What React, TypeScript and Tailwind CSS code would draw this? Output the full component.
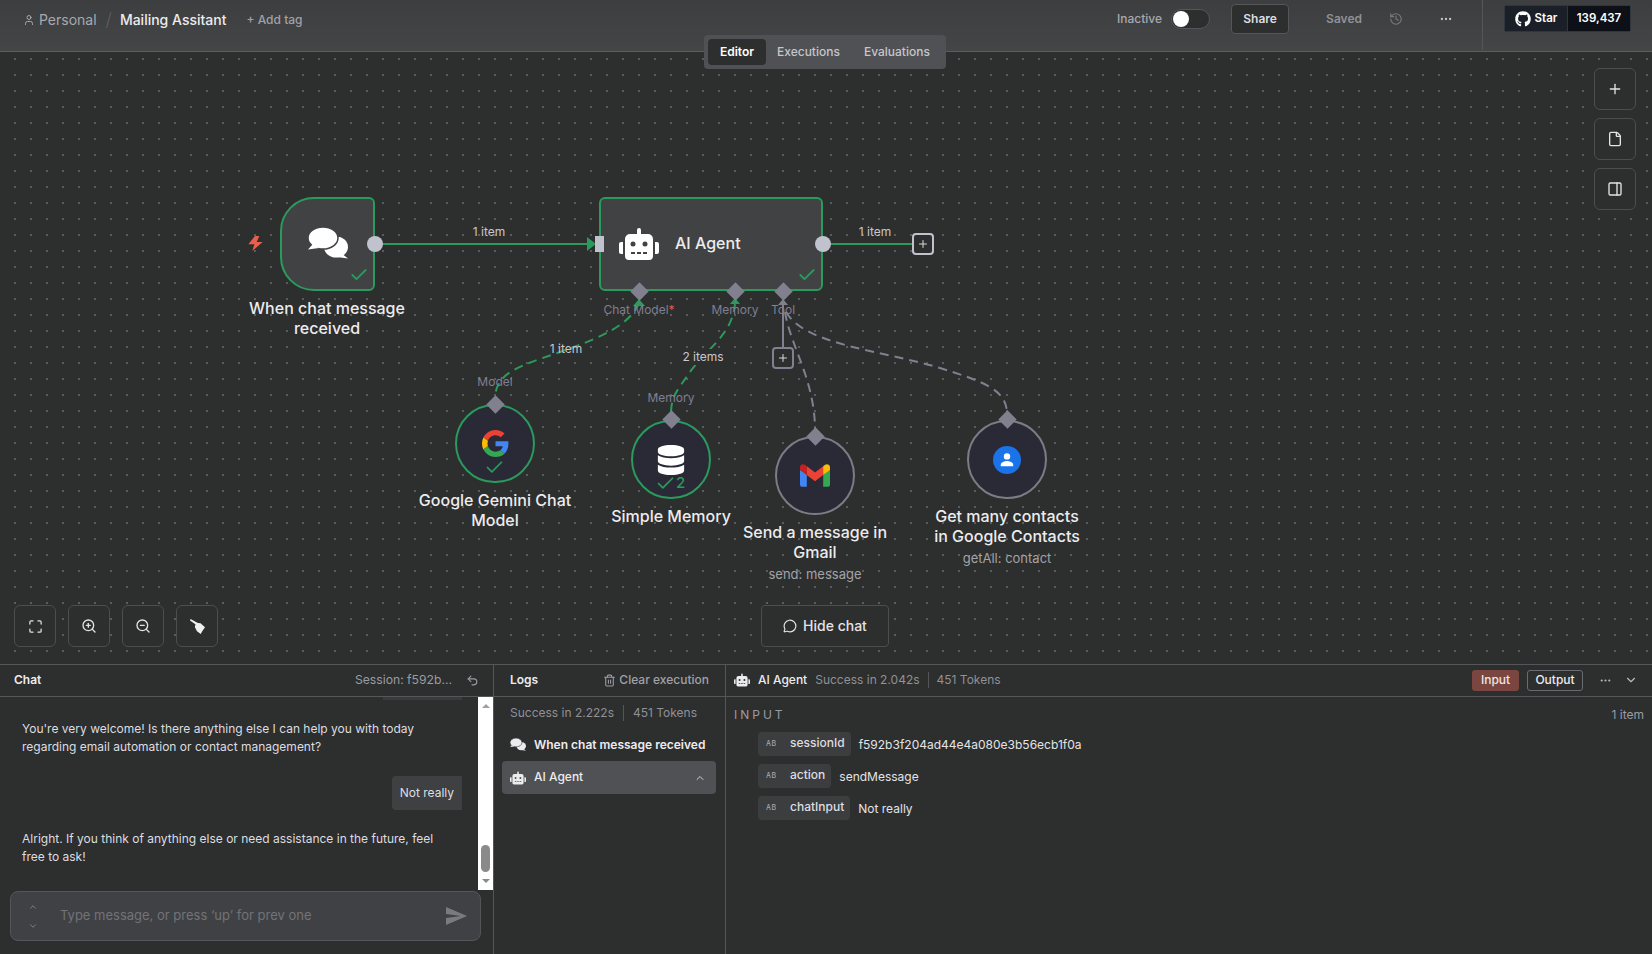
import React from 'react';
import {
  Check,
  ChevronDown,
  ChevronUp,
  Ellipsis,
  File,
  History,
  Maximize,
  MessageCircle,
  PanelRight,
  Plus,
  Trash2,
  Undo2,
  User,
  ZoomIn,
  ZoomOut,
} from 'lucide-react';
import { FaDatabase, FaGithub, FaRobot } from 'react-icons/fa';
import { MdSend } from 'react-icons/md';

const GoogleG = () => (
  <svg viewBox="0 0 48 48" className="w-[27px] h-[27px]">
    <path fill="#EA4335" d="M24 9.5c3.54 0 6.71 1.22 9.21 3.6l6.85-6.85C35.9 2.38 30.47 0 24 0 14.62 0 6.51 5.38 2.56 13.22l7.98 6.19C12.43 13.72 17.74 9.5 24 9.5z" />
    <path fill="#4285F4" d="M46.98 24.55c0-1.57-.15-3.09-.38-4.55H24v9.02h12.94c-.58 2.96-2.26 5.48-4.78 7.18l7.73 6c4.51-4.18 7.09-10.36 7.09-17.65z" />
    <path fill="#FBBC05" d="M10.53 28.59c-.48-1.45-.76-2.99-.76-4.59s.27-3.14.76-4.59l-7.98-6.19C.92 16.46 0 20.12 0 24c0 3.88.92 7.54 2.56 10.78l7.97-6.19z" />
    <path fill="#34A853" d="M24 48c6.48 0 11.93-2.13 15.89-5.81l-7.73-6c-2.15 1.45-4.92 2.3-8.16 2.3-6.26 0-11.57-4.22-13.47-9.91l-7.98 6.19C6.51 42.62 14.62 48 24 48z" />
  </svg>
);

const GmailLogo = () => (
  <svg viewBox="0 0 256 193" className="w-[30px] h-[23px]">
    <path fill="#4285F4" d="M58.182 192.05V93.14L27.507 65.077 0 49.504v125.091c0 9.658 7.825 17.455 17.455 17.455h40.727Z" />
    <path fill="#34A853" d="M197.818 192.05h40.727c9.659 0 17.455-7.826 17.455-17.455V49.505l-31.156 17.837-27.026 25.798v98.91Z" />
    <path fill="#EA4335" d="m58.182 93.14-4.174-38.647 4.174-36.989L128 69.868l69.818-52.364 4.669 34.992-4.669 40.644L128 145.504z" />
    <path fill="#FBBC04" d="M197.818 17.504V93.14L256 49.504V26.231c0-21.585-24.64-33.89-41.89-20.945l-16.292 12.218Z" />
    <path fill="#C5221F" d="m0 49.504 26.759 20.07L58.182 93.14V17.504L41.89 5.286C24.61-7.66 0 4.646 0 26.23v23.273Z" />
  </svg>
);

const ContactsLogo = () => (
  <svg viewBox="0 0 28 28" className="w-[28px] h-[28px]">
    <circle cx="14" cy="14" r="14" fill="#1a73e8" />
    <circle cx="14" cy="10.4" r="3.2" fill="#fff" />
    <path fill="#fff" d="M7.8 18.6c0-2.4 4-3.6 6.2-3.6s6.2 1.2 6.2 3.6v1.6H7.8z" />
  </svg>
);

// two speech bubbles, the front one cut out by the background colour
const ChatBubbles = ({ className, gap }: { className: string; gap: string }) => (
  <svg viewBox="0 0 40 32" className={className} fill="currentColor">
    <ellipse cx="28" cy="20" rx="12" ry="10.5" />
    <path d="M33 26 L40 31.5 L29 30 Z" />
    <ellipse cx="15" cy="11" rx="15" ry="11" stroke={gap} strokeWidth="1.5" />
    <path d="M5 17 L0 22.5 L11 21 Z" />
  </svg>
);

const BroomIcon = () => (
  <svg viewBox="0 0 15 15" className="w-[15px] h-[15px]" fill="#f0f0f2">
    <path d="M0.6 0 L8.2 4.2 L6.8 6.2 L0 1.6 Z" />
    <path d="M6 3.8 L10.5 4.2 L15 8.3 L12.4 12 L10.7 15 L7 12.2 L4.8 8 Z" />
  </svg>
);

// n8n style connector point
const Diamond = ({ className }: { className: string }) => (
  <div className={`absolute w-[13px] h-[13px] rotate-45 bg-[#80808f] ${className}`} />
);

const PortLabel = ({ className, children }: { className: string; children: React.ReactNode }) => (
  <div className={`absolute -translate-x-1/2 text-xs leading-4 text-[#7f7f93] whitespace-nowrap ${className}`}>{children}</div>
);

const EdgeLabel = ({ className, children }: { className: string; children: React.ReactNode }) => (
  <div className={`absolute -translate-x-1/2 text-xs leading-4 text-[#c8c8cc] whitespace-nowrap ${className}`}>{children}</div>
);

const NodeTitle = ({ className, lines, sub }: { className: string; lines: string[]; sub?: string }) => (
  <div className={`absolute -translate-x-1/2 w-[190px] text-center text-base leading-5 font-medium text-[#ececee] ${className}`}>
    {lines.map((line) => (
      <div key={line}>{line}</div>
    ))}
    {sub && <div className="mt-[3px] text-[13px] leading-[18px] font-normal text-[#a3a3a8]">{sub}</div>}
  </div>
);

const CanvasButton = ({ children }: { children: React.ReactNode }) => (
  <button className="w-[42px] h-[42px] flex items-center justify-center rounded-md border border-[#4c4d50] bg-[#2d2e2e] text-[#e4e4e6]">
    {children}
  </button>
);

const CircleNode = ({ className, children, green }: { className: string; children: React.ReactNode; green?: boolean }) => (
  <div
    className={`absolute w-[80px] h-[79px] rounded-full border-2 bg-[#292a36] flex items-center justify-center ${
      green ? 'border-[#2b9a5c]' : 'border-[#7c7c85]'
    } ${className}`}
  >
    {children}
  </div>
);

const Pill = ({ name, value }: { name: string; value: string }) => (
  <div className="flex items-center gap-2 h-6">
    <div className="flex items-center h-6 rounded bg-[#3c3d3f] pl-2 pr-[6px]">
      <span className="w-[24px] text-[7px] font-medium tracking-[0.5px] text-[#a3a5aa]">AB</span>
      <span className="text-xs leading-4 -mt-[3px] font-medium text-[#dcdde0]">{name}</span>
    </div>
    <span className="mt-[2px] text-xs text-[#e4e4e6]">{value}</span>
  </div>
);

export default function App() {
  return (
    <div className="relative flex flex-col w-full h-[954px] overflow-hidden bg-[#2d2e2e] font-['Inter',sans-serif] text-[#e4e4e6]">
      {/* Top bar */}
      <header className="h-[52px] shrink-0 border-b border-[#5b5c5e] bg-gradient-to-b from-[#3d3e40] to-[#444547] flex items-start">
        <div className="flex items-center h-[39px] pl-[23px]">
          <User size={12} className="text-[#a7a9ae]" />
          <span className="ml-[4px] text-sm text-[#a7a9ae]">Personal</span>
          <span className="ml-[9px] text-lg font-light text-[#5d5e61]">/</span>
          <span className="ml-[8px] text-sm font-medium text-[#ececee]">Mailing Assitant</span>
          <span className="ml-[20px] text-xs font-medium text-[#a0a2a8]">+ Add tag</span>
        </div>
        <div className="ml-auto flex items-center h-[38px]">
          <span className="text-xs font-medium text-[#a7a9ae]">Inactive</span>
          <div className="ml-[9px] w-[39px] h-[20px] rounded-full border border-[#55565a] bg-[#2d2e2e] flex items-center pl-[1px]">
            <div className="w-[16px] h-[16px] rounded-full bg-white" />
          </div>
          <button className="ml-[21px] w-[58px] h-[30px] rounded border border-[#55565a] bg-[#2d2e2e] text-xs font-semibold text-[#dcdde0]">
            Share
          </button>
          <span className="ml-[37px] text-xs font-semibold text-[#8f9197]">Saved</span>
          <History size={14} className="ml-[27px] text-[#77787c]" />
          <Ellipsis size={14} className="ml-[36px] text-[#c5c6ca]" />
          <div className="ml-[29px] w-px h-[50px] self-start bg-[#55565a]" />
        </div>
        <div className="ml-[21px] mr-[21px] mt-[5px] flex h-[27px] w-[127px] rounded-[2px] border border-[#30363d] text-[11.5px] font-semibold text-white">
          <div className="w-[63px] flex items-center justify-center gap-[4px] bg-[#1b2028] border-r border-[#30363d]">
            <FaGithub size={16} />
            Star
          </div>
          <div className="flex-1 flex items-center justify-center bg-[#0d1117]">139,437</div>
        </div>
      </header>

      {/* Editor tabs sit across the header edge */}
      <div className="absolute z-10 left-[704px] top-[35px] h-[34px] w-[242px] rounded bg-[#505154] flex items-center px-[4px] text-xs font-medium text-[#c5c6ca]">
        <div className="w-[58px] h-[26px] rounded bg-[#2d2e2e] flex items-center justify-center font-semibold text-white">Editor</div>
        <div className="ml-[11px]">Executions</div>
        <div className="ml-[24px]">Evaluations</div>
      </div>

      {/* Canvas */}
      <main className="relative flex-1 bg-[radial-gradient(circle,#8c8d91_0.5px,transparent_0.9px)] bg-size-[16px_16px] bg-position-[7px_-1px]">
        <svg viewBox="0 52 1652 612" className="absolute inset-0 w-[1652px] h-[612px]" fill="none">
          <path d="M380 244 H590" stroke="#2b9a5c" strokeWidth="2" />
          <path d="M587 237 L596 244 L587 251 Z" fill="#2b9a5c" />
          <path d="M826 244 H912" stroke="#2b9a5c" strokeWidth="2" />
          <path d="M639 303 C630 325 600 338 560 352 C520 366 496 372 495 398" stroke="#2b9a5c" strokeWidth="2" strokeDasharray="9 6" />
          <path d="M633 306 L639 299 L645 306 Z" fill="#2b9a5c" />
          <path d="M735 303 C733 335 705 350 690 372 C678 390 671 395 671 414" stroke="#2b9a5c" strokeWidth="2" strokeDasharray="9 6" />
          <path d="M730 304 L735 298 L740 304 Z" fill="#2b9a5c" />
          <path d="M783 304 L783 348" stroke="#80808f" strokeWidth="2" />
          <path d="M778 305 L783 299 L788 305 Z" fill="#80808f" />
          <path d="M785 312 C790 345 815 380 815 430" stroke="#80808f" strokeWidth="2" strokeDasharray="9 6" />
          <path d="M786 312 C805 345 880 350 940 368 C985 382 1007 390 1007 414" stroke="#80808f" strokeWidth="2" strokeDasharray="9 6" />
        </svg>

        {/* Chat trigger */}
        <svg viewBox="0 0 43 45" className="absolute left-[248px] top-[184px] w-[15px] h-[15px]" fill="#e8604c">
          <path d="M20 0 L0 25 H18 L12 45 L43 18 H25 L33 0 Z" />
        </svg>
        <div className="absolute left-[280px] top-[145px] w-[95px] h-[94px] rounded-l-[34px] rounded-r-md border-2 border-[#2b9a5c] bg-[#414244] flex items-center justify-center">
          <ChatBubbles className="w-[40px] h-[32px] -mt-[3px] text-white" gap="#414244" />
          <Check size={20} strokeWidth={2.2} className="absolute right-[4px] bottom-[4px] text-[#2b9a5c]" />
        </div>
        <div className="absolute left-[367px] top-[184px] w-[16px] h-[16px] rounded-full bg-[#c0c3ce]" />
        <EdgeLabel className="left-[489px] top-[172px]">1 item</EdgeLabel>
        <NodeTitle className="left-[327px] top-[246px]" lines={['When chat message', 'received']} />

        {/* AI Agent */}
        <div className="absolute left-[599px] top-[145px] w-[224px] h-[94px] rounded-md border-2 border-[#2b9a5c] bg-[#414244] flex items-center pl-[18px]">
          <FaRobot size={40} className="text-white" />
          <span className="ml-[16px] -mt-[2px] text-base font-medium text-[#ececee]">AI Agent</span>
          <Check size={20} strokeWidth={2.2} className="absolute right-[4px] bottom-[4px] text-[#2b9a5c]" />
        </div>
        <div className="absolute left-[595px] top-[184px] w-[9px] h-[16px] bg-[#c0c3ce]" />
        <div className="absolute left-[815px] top-[184px] w-[16px] h-[16px] rounded-full bg-[#c0c3ce]" />
        <EdgeLabel className="left-[875px] top-[172px]">1 item</EdgeLabel>
        <div className="absolute left-[912px] top-[181px] w-[22px] h-[22px] rounded border-2 border-[#c0c3ce] bg-[#2d2e2e] flex items-center justify-center">
          <Plus size={12} className="text-[#d8d9dd]" />
        </div>

        <Diamond className="left-[632.5px] top-[233px]" />
        <Diamond className="left-[728.5px] top-[233px]" />
        <Diamond className="left-[776.5px] top-[233px]" />
        <PortLabel className="left-[639px] top-[250px]">
          Chat Model<span className="text-[#f0524c]">*</span>
        </PortLabel>
        <PortLabel className="left-[735px] top-[250px]">Memory</PortLabel>
        <PortLabel className="left-[783px] top-[250px]">Tool</PortLabel>

        <EdgeLabel className="left-[566px] top-[289px]">1 item</EdgeLabel>
        <EdgeLabel className="left-[703px] top-[297px] bg-[#2d2e2e]">2 items</EdgeLabel>

        <div className="absolute left-[772px] top-[295px] w-[22px] h-[22px] rounded border-2 border-[#80808f] bg-[#2d2e2e] flex items-center justify-center">
          <Plus size={12} className="text-[#d8d9dd]" />
        </div>

        {/* Gemini model */}
        <PortLabel className="left-[495px] top-[322px]">Model</PortLabel>
        <CircleNode green className="left-[455px] top-[352px]">
          <GoogleG />
          <Check size={21} className="absolute left-[27px] bottom-[3px] text-[#2b9a5c]" />
        </CircleNode>
        <Diamond className="left-[488.5px] top-[346px]" />
        <NodeTitle className="left-[495px] top-[438px]" lines={['Google Gemini Chat', 'Model']} />

        {/* Simple memory */}
        <PortLabel className="left-[671px] top-[338px]">Memory</PortLabel>
        <CircleNode green className="left-[631px] top-[368px]">
          <FaDatabase size={30} className="text-white" />
          <Check size={21} className="absolute left-[22px] bottom-[3px] text-[#2b9a5c]" />
          <span className="absolute left-[43px] bottom-[4px] text-[15px] leading-5 font-medium text-[#2b9a5c]">2</span>
        </CircleNode>
        <Diamond className="left-[664.5px] top-[361px]" />
        <NodeTitle className="left-[671px] top-[454px]" lines={['Simple Memory']} />

        {/* Gmail tool */}
        <CircleNode className="left-[775px] top-[384px]">
          <GmailLogo />
        </CircleNode>
        <Diamond className="left-[808.5px] top-[378px]" />
        <NodeTitle className="left-[815px] top-[470px]" lines={['Send a message in', 'Gmail']} sub="send: message" />

        {/* Contacts tool */}
        <CircleNode className="left-[967px] top-[368px]">
          <ContactsLogo />
        </CircleNode>
        <Diamond className="left-[1000.5px] top-[361px]" />
        <NodeTitle className="left-[1007px] top-[454px]" lines={['Get many contacts', 'in Google Contacts']} sub="getAll: contact" />

        {/* Right side tools */}
        <div className="absolute right-[16px] top-[16px] flex flex-col gap-2">
          <CanvasButton>
            <Plus size={16} />
          </CanvasButton>
          <CanvasButton>
            <File size={16} />
          </CanvasButton>
          <CanvasButton>
            <PanelRight size={16} />
          </CanvasButton>
        </div>

        {/* Bottom left tools */}
        <div className="absolute left-[14px] top-[553px] flex gap-3">
          <CanvasButton>
            <Maximize size={15} />
          </CanvasButton>
          <CanvasButton>
            <ZoomIn size={16} />
          </CanvasButton>
          <CanvasButton>
            <ZoomOut size={16} />
          </CanvasButton>
          <CanvasButton>
            <BroomIcon />
          </CanvasButton>
        </div>

        <button className="absolute left-[761px] top-[553px] w-[128px] h-[42px] rounded border border-[#4c4d50] bg-[#2d2e2e] flex items-center justify-center gap-[6px] text-sm font-medium text-[#e4e4e6]">
          <MessageCircle size={14} />
          Hide chat
        </button>
      </main>

      {/* Bottom panel */}
      <section className="h-[290px] shrink-0 border-t border-[#55565a] flex bg-[#2d2e2e]">
        {/* Chat */}
        <div className="w-[494px] shrink-0 border-r border-[#55565a] flex flex-col">
          <div className="h-[33px] shrink-0 border-b border-[#55565a] flex items-center pl-[14px] pr-[14px] -mt-px">
            <span className="text-xs font-semibold text-[#ececee]">Chat</span>
            <span className="ml-auto text-[12.2px] text-[#9a9ca3]">Session: f592b...</span>
            <Undo2 size={13} className="ml-[14px] text-[#9a9ca3]" />
          </div>
          <div className="h-[193px] shrink-0 flex">
            <div className="flex-1 flex flex-col pl-[22px] pr-4 text-xs leading-[18px] text-[#dcdde0]">
              <div className="self-end w-[79px] h-[3px] bg-[#3a3b3d]" />
              <p className="mt-[20px] w-[420px]">
                You're very welcome! Is there anything else I can help you with today regarding email automation or contact management?
              </p>
              <div className="mt-[20px] self-end h-[34px] rounded-l flex items-center px-2 bg-[#3f4042]">Not really</div>
              <p className="mt-[20px] w-[420px]">Alright. If you think of anything else or need assistance in the future, feel free to ask!</p>
            </div>
            <div className="w-[15px] shrink-0 bg-white flex flex-col items-center pt-[7px] pb-[7px]">
              <div className="w-0 h-0 border-x-[4px] border-x-transparent border-b-[4px] border-b-[#a0a0a0]" />
              <div className="mt-auto w-[9px] h-[27px] rounded-full bg-[#8a8a8a]" />
              <div className="mt-[7px] w-0 h-0 border-x-[4px] border-x-transparent border-t-[4px] border-t-[#8a8a8a]" />
            </div>
          </div>
          <div className="ml-[10px] mt-px w-[471px] h-[50px] rounded-lg border border-[#55565a] bg-[#404144] flex items-center">
            <div className="w-[44px] flex flex-col items-center gap-[9px] text-[#8a8b8f]">
              <ChevronUp size={10} />
              <ChevronDown size={10} />
            </div>
            <span className="ml-[5px] text-[13px] text-[#727377]">Type message, or press ‘up’ for prev one</span>
            <MdSend size={24} className="ml-auto mr-[12px] text-[#7a7b7f]" />
          </div>
        </div>

        {/* Logs */}
        <div className="w-[232px] shrink-0 border-r border-[#55565a] flex flex-col">
          <div className="h-[33px] shrink-0 border-b border-[#55565a] flex items-center pl-[16px] pr-[16px] -mt-px">
            <span className="text-xs font-semibold text-[#ececee]">Logs</span>
            <Trash2 size={13} className="ml-auto text-[#9a9ca3]" />
            <span className="ml-[3px] text-xs font-medium text-[#a0a2a8]">Clear execution</span>
          </div>
          <div className="flex items-center h-[32px] pl-[16px] text-xs text-[#8f9197]">
            <span>Success in 2.222s</span>
            <span className="mx-[9px] w-px h-[16px] bg-[#55565a]" />
            <span>451 Tokens</span>
          </div>
          <div className="ml-[8px] mr-[9px] flex flex-col gap-px text-xs">
            <div className="flex items-center h-[31px] pl-[8px]">
              <ChatBubbles className="w-[16px] h-[13px] text-[#ececee]" gap="#2d2e2e" />
              <span className="ml-[8px] font-semibold text-[#ececee]">When chat message received</span>
            </div>
            <div className="flex items-center h-[33px] pl-[8px] rounded bg-[#505154]">
              <FaRobot size={16} className="text-[#ececee]" />
              <span className="ml-[8px] -mt-[1px] font-medium text-[#ececee]">AI Agent</span>
              <ChevronUp size={12} className="ml-auto mr-[10px] text-[#d0d0d4]" />
            </div>
          </div>
        </div>

        {/* Node details */}
        <div className="flex-1 flex flex-col">
          <div className="h-[33px] shrink-0 border-b border-[#55565a] flex items-center pl-[8px] pr-[14px] text-xs -mt-px">
            <FaRobot size={16} className="text-[#ececee]" />
            <span className="ml-[8px] font-medium text-[#ececee]">AI Agent</span>
            <span className="ml-[8px] text-[#8f9197]">Success in 2.042s</span>
            <span className="mx-[8px] w-px h-[16px] bg-[#55565a]" />
            <span className="text-[#8f9197]">451 Tokens</span>
            <button className="ml-auto h-[21px] w-[47px] rounded-[3px] bg-[#7a463f] font-medium text-[#f0e6e4]">Input</button>
            <button className="ml-[8px] h-[21px] w-[56px] rounded-[3px] border border-[#6a6b6e] font-medium text-[#ececee]">Output</button>
            <Ellipsis size={13} className="ml-[16px] text-[#b8b9bd]" />
            <ChevronDown size={14} className="ml-[12px] text-[#b8b9bd]" />
          </div>
          <div className="flex items-center pl-[8px] pr-[8px] h-[35px] text-xs text-[#9a9ca3]">
            <span className="tracking-[3px]">INPUT</span>
            <span className="ml-auto">1 item</span>
          </div>
          <div className="pl-[32px] flex flex-col gap-2">
            <Pill name="sessionId" value="f592b3f204ad44e4a080e3b56ecb1f0a" />
            <Pill name="action" value="sendMessage" />
            <Pill name="chatInput" value="Not really" />
          </div>
        </div>
      </section>
    </div>
  );
}
